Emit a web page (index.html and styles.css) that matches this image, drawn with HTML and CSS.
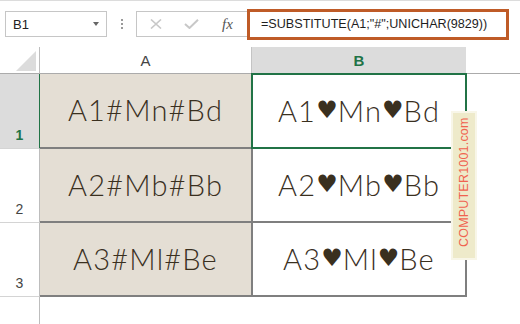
FILE: index.html
```html
<!DOCTYPE html>
<html lang="en">
<head>
    <meta charset="UTF-8">
    <meta name="viewport" content="width=device-width, initial-scale=1.0">
    <title>SUBSTITUTE with UNICHAR</title>
    <link rel="stylesheet" href="styles.css">
</head>
<body>
    <div class="toolbar">
        <div class="name-box">
            <span>B1</span>
            <span class="caret"></span>
        </div>
        <div class="grip"><i></i><i></i><i></i></div>
        <div class="fx-buttons">
            <svg class="btn-icon" width="12" height="10" viewBox="0 0 12 10">
                <path d="M1 0.5 L11 9.5 M11 0.5 L1 9.5" stroke="#c8c8c8" stroke-width="1.6" fill="none"/>
            </svg>
            <svg class="btn-icon" width="15" height="10" viewBox="0 0 15 10">
                <path d="M1 5 L5.5 9 L14 0.8" stroke="#c8c8c8" stroke-width="2" fill="none"/>
            </svg>
            <span class="fx">fx</span>
        </div>
        <div class="formula">=SUBSTITUTE(A1;"#";UNICHAR(9829))</div>
    </div>

    <div class="sheet">
        <div class="corner"></div>
        <div class="col-head">A</div>
        <div class="col-head active">B</div>
        <div class="col-head"></div>

        <div class="row-head active">1</div>
        <div class="cell source">A1#Mn#Bd</div>
        <div class="cell result selected">A1<span class="heart">♥</span>Mn<span class="heart">♥</span>Bd</div>
        <div></div>

        <div class="row-head">2</div>
        <div class="cell source">A2#Mb#Bb</div>
        <div class="cell result">A2<span class="heart">♥</span>Mb<span class="heart">♥</span>Bb</div>
        <div></div>

        <div class="row-head">3</div>
        <div class="cell source">A3#Ml#Be</div>
        <div class="cell result">A3<span class="heart">♥</span>Ml<span class="heart">♥</span>Be</div>
        <div></div>

        <div class="row-head last"></div>
    </div>

    <div class="watermark">COMPUTER1001.com</div>
</body>
</html>
```

FILE: styles.css
```css
body {
    margin: 0;
    width: 520px;
    height: 324px;
    overflow: hidden;
    background: #fff;
    font-family: "Liberation Sans", Arial, sans-serif;
    color: #333;
    position: relative;
}
.toolbar {
    height: 47px;
    box-sizing: border-box;
    border-top: 1px solid #dcdcdc;
    display: flex;
    align-items: center;
}
.name-box {
    margin-left: 5px;
    width: 102px;
    height: 26px;
    box-sizing: border-box;
    border: 1px solid #c6c6c6;
    display: flex;
    align-items: center;
    justify-content: space-between;
    padding: 0 7px 0 7px;
    font-size: 13px;
    color: #222;
}
.caret {
    width: 0;
    height: 0;
    border-left: 3.5px solid transparent;
    border-right: 3.5px solid transparent;
    border-top: 4px solid #666;
}
.grip {
    margin-left: 14px;
    display: flex;
    flex-direction: column;
    gap: 2px;
}
.grip i {
    display: block;
    width: 2px;
    height: 2px;
    background: #9a9a9a;
}
.fx-buttons {
    margin-left: 13px;
    width: 113px;
    height: 26px;
    box-sizing: border-box;
    border: 1px solid #c6c6c6;
    display: flex;
    align-items: center;
    padding-left: 13px;
}
.btn-icon {
    margin-right: 22px;
}
.btn-icon + .btn-icon {
    margin-right: 23px;
}
.fx {
    font-family: "Liberation Serif", serif;
    font-style: italic;
    font-size: 15px;
    color: #555;
}
.formula {
    margin-left: -2px;
    width: 262px;
    height: 31px;
    box-sizing: border-box;
    border: 3px solid #bf5b27;
    display: flex;
    align-items: center;
    padding-left: 11px;
    font-size: 12.6px;
    color: #1e1e1e;
    background: #fff;
}
.sheet {
    display: grid;
    grid-template-columns: 40px 211px 216px 1fr;
    grid-template-rows: 27px 75px 74px 74px 1fr;
    height: 277px;
}
.corner {
    box-sizing: border-box;
    border-right: 1px solid #bdbdbd;
    border-bottom: 1px solid #ababab;
    position: relative;
}
.corner::after {
    content: "";
    position: absolute;
    right: 3px;
    bottom: 2px;
    width: 20px;
    height: 20px;
    background: #dcdcdc;
    clip-path: polygon(100% 0, 100% 100%, 0 100%);
}
.col-head {
    box-sizing: border-box;
    border-bottom: 1px solid #ababab;
    display: flex;
    align-items: center;
    justify-content: center;
    font-size: 15px;
    color: #444;
    padding-top: 1px;
}
.col-head.active {
    background: #dcdcdc;
    border-left: 1px solid #c4c4c4;
    margin-right: 1px;
    color: #217346;
    font-weight: bold;
}
.row-head {
    box-sizing: border-box;
    border-right: 1px solid #bdbdbd;
    border-bottom: 1px solid #d4d4d4;
    display: flex;
    align-items: flex-end;
    justify-content: center;
    padding-bottom: 5px;
    font-size: 14px;
    color: #444;
}
.row-head.active {
    background: #dcdcdc;
    border-right: 2px solid #217346;
    color: #217346;
    font-weight: bold;
    margin-right: -1px;
}
.row-head.last {
    border-bottom: none;
}
.cell {
    box-sizing: border-box;
    display: flex;
    align-items: center;
    justify-content: center;
    font-family: Lato, "DejaVu Sans", sans-serif;
    font-weight: 300;
    font-size: 29px;
    letter-spacing: 1.2px;
    color: #3a301f;
    border-bottom: 2px solid #7f7f7f;
    padding-bottom: 2px;
}
.heart {
    font-family: "DejaVu Sans", sans-serif;
    font-weight: normal;
    font-size: 24px;
    letter-spacing: 0;
}
.source {
    background: #e4ded4;
}
.result {
    background: #fff;
    border-left: 2px solid #7f7f7f;
    border-right: 2px solid #7f7f7f;
}
.result.selected {
    border: 2px solid #217346;
    margin-top: -1px;
}
.watermark {
    position: absolute;
    left: 451px;
    top: 111px;
    width: 26px;
    height: 149px;
    box-sizing: border-box;
    background: #eeeaca;
    border: 2px solid #f8f6e8;
    writing-mode: vertical-rl;
    transform: rotate(180deg);
    display: flex;
    align-items: center;
    justify-content: center;
    font-size: 12.5px;
    letter-spacing: 0.2px;
    color: #f0624f;
    padding-top: 6px;
}
```
